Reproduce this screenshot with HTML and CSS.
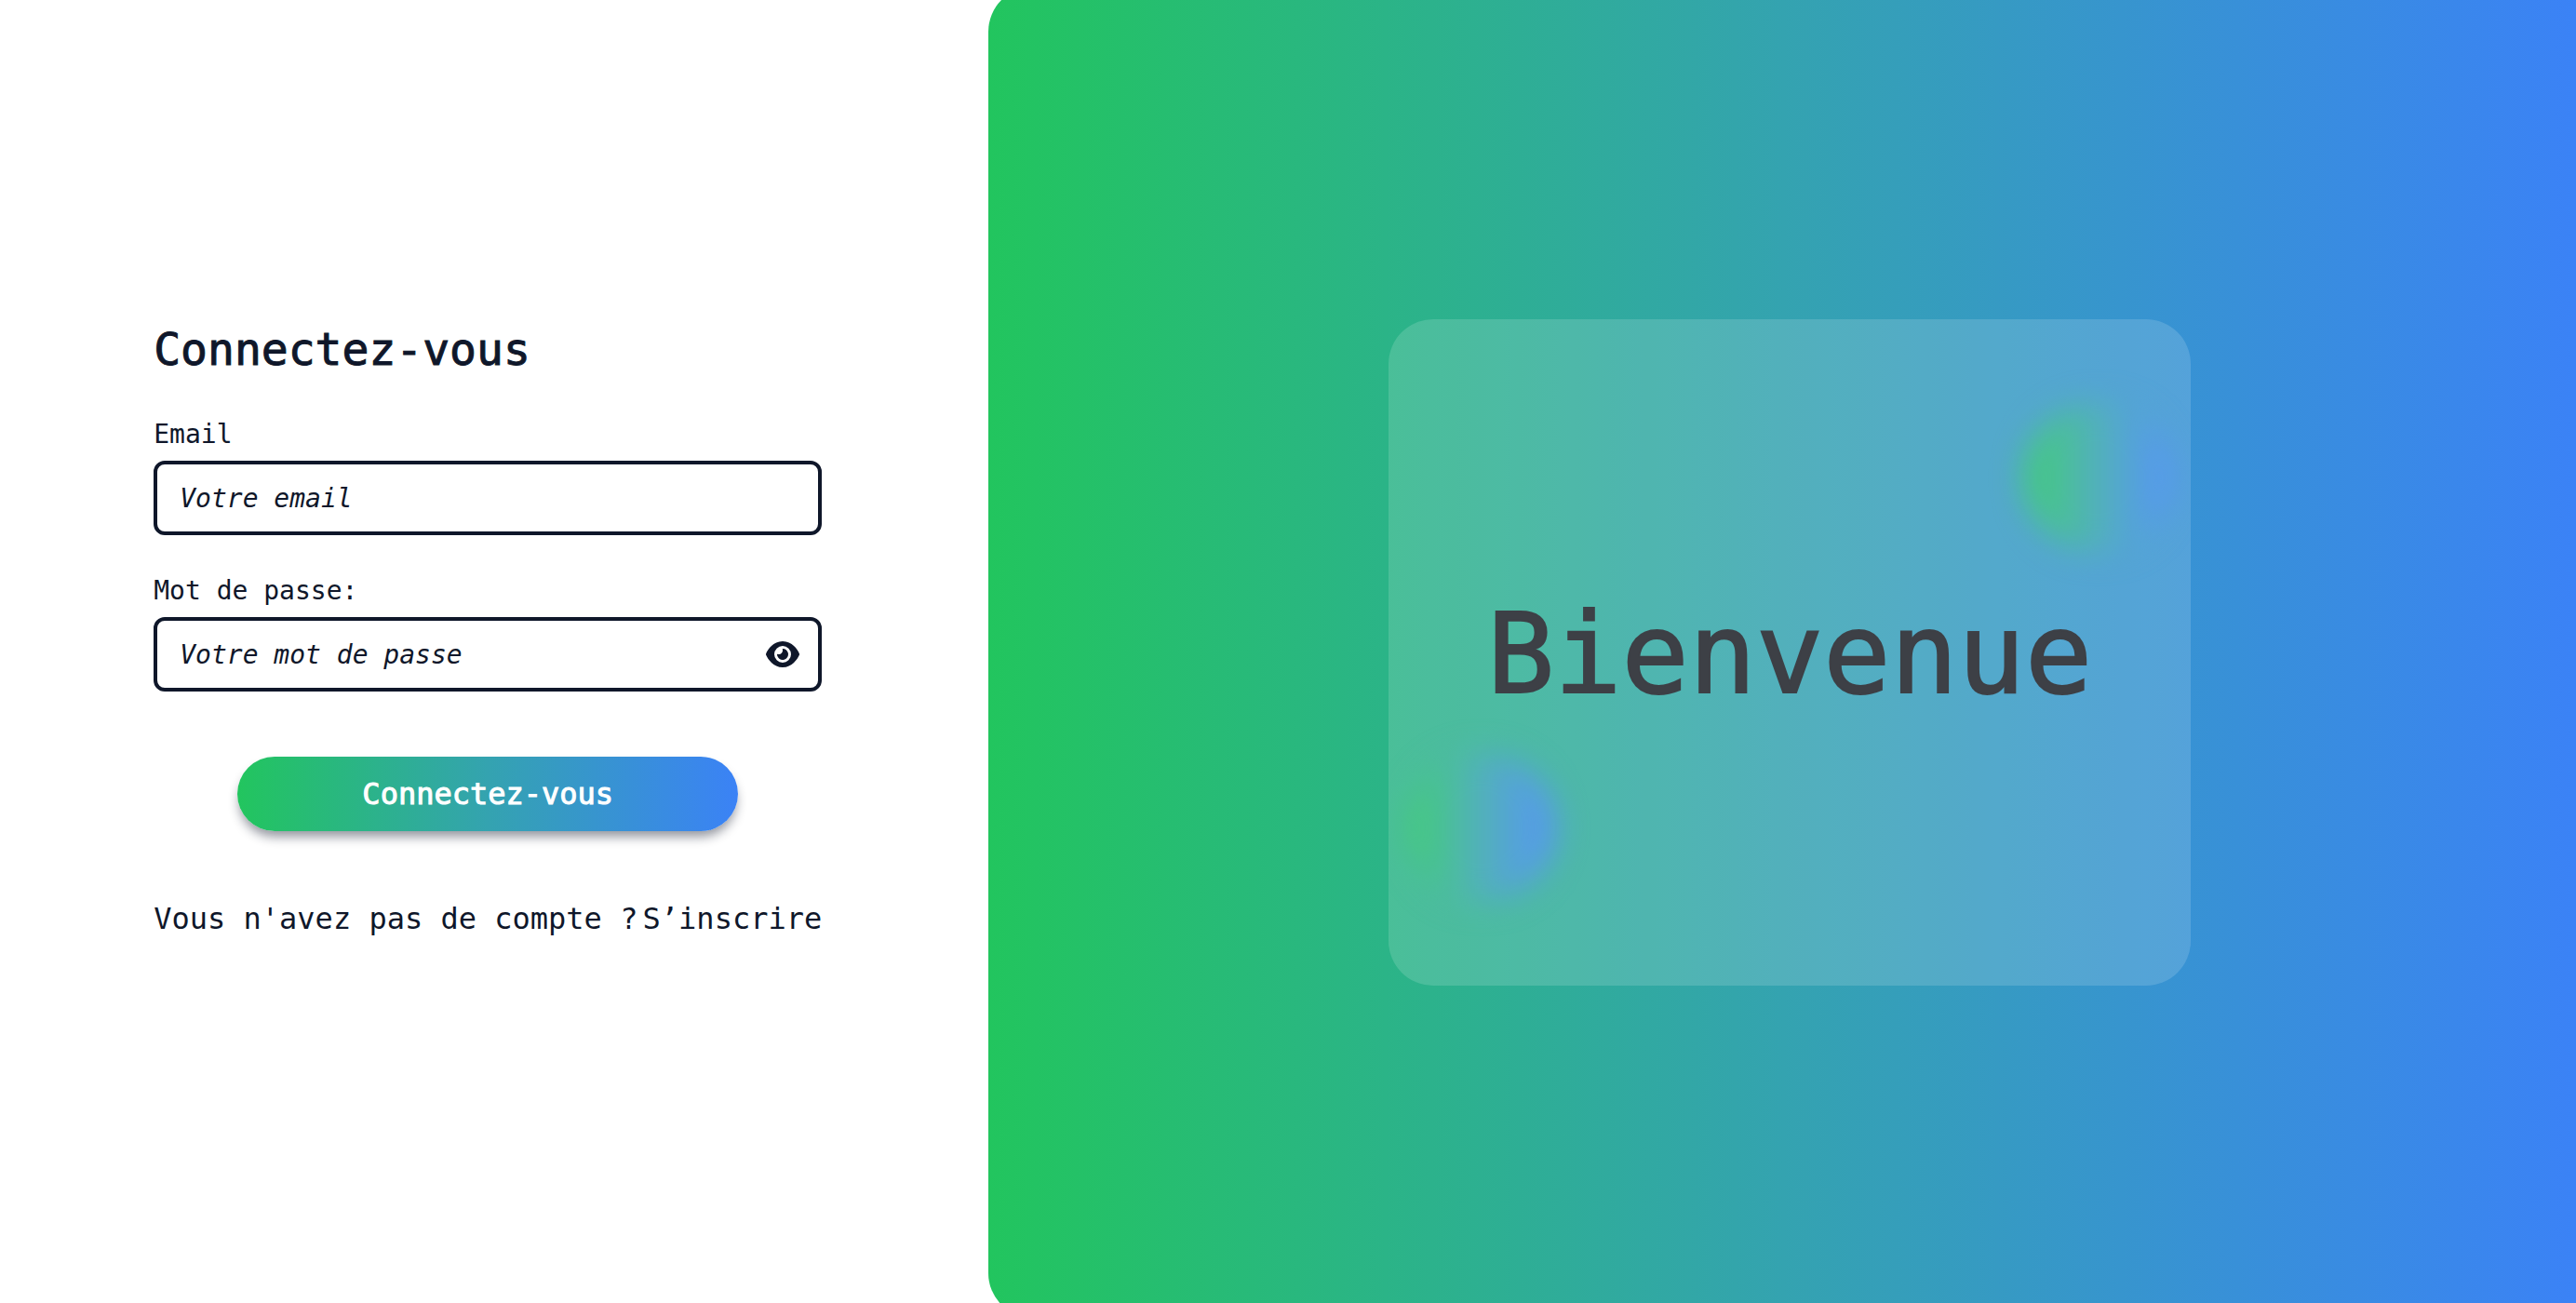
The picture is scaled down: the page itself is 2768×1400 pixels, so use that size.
FILE: index.html
```html
<!DOCTYPE html>
<html lang="fr">
<head>
<meta charset="utf-8">
<title>Connexion</title>
<link rel="stylesheet" href="styles.css">
</head>
<body>
<main class="page">
  <section class="login">
    <form class="form">
      <h1 class="title">Connectez-vous</h1>
      <div class="field">
        <label for="email">Email</label>
        <div class="control">
          <input id="email" type="email" placeholder="Votre email">
        </div>
      </div>
      <div class="field">
        <label for="password">Mot de passe:</label>
        <div class="control">
          <input id="password" type="password" placeholder="Votre mot de passe">
          <button class="reveal" type="button" aria-label="Afficher le mot de passe">
            <svg viewBox="0 0 576 512" aria-hidden="true"><path d="M288 32c-80.800 0-145.500 36.800-192.600 80.600C48.600 156 17.300 208 2.500 243.700c-3.300 7.900-3.300 16.700 0 24.600C17.300 304 48.600 356 95.400 399.400C142.500 443.200 207.200 480 288 480s145.500-36.800 192.600-80.600c46.800-43.500 78.100-95.400 93-131.100c3.300-7.900 3.300-16.700 0-24.600c-14.900-35.700-46.200-87.700-93-131.100C433.500 68.800 368.800 32 288 32zM144 256a144 144 0 1 1 288 0 144 144 0 1 1 -288 0zm144-64c0 35.300-28.700 64-64 64c-7.100 0-13.900-1.200-20.300-3.300c-5.500-1.800-11.900 1.600-11.700 7.400c.3 6.900 1.300 13.800 3.200 20.700c13.700 51.200 66.400 81.600 117.600 67.900s81.600-66.400 67.900-117.600c-11.100-41.500-47.800-69.400-88.600-71.100c-5.800-.2-9.200 6.100-7.400 11.700c2.100 6.400 3.300 13.200 3.300 20.300z"/></svg>
          </button>
        </div>
      </div>
      <button class="submit" type="submit">Connectez-vous</button>
      <p class="signup"><span>Vous n'avez pas de compte ?</span><a href="#inscription">S’inscrire</a></p>
    </form>
  </section>
  <section class="hero">
    <div class="card">
      <span class="orb orb-top"></span>
      <span class="orb orb-bottom"></span>
      <p class="welcome">Bienvenue</p>
    </div>
  </section>
</main>
</body>
</html>
```
FILE: styles.css
```css
* { box-sizing: border-box; }

:root {
  --ink: #0f172a;
  --brand: linear-gradient(to right, #22c55e, #34a3b0, #3b82f6);
}

body {
  margin: 0;
  color: var(--ink);
  background: #fff;
  font-family: "DejaVu Sans Mono", monospace;
}

h1, p { margin: 0; font-weight: 400; }
input, button { font: inherit; color: inherit; }

.page {
  display: grid;
  grid-template-columns: 38fr 61fr;
  min-height: 100vh;
  overflow: hidden;
}

.login {
  display: flex;
  align-items: center;
  justify-content: center;
  padding: 0 14px 46px 0;
}

.form {
  display: flex;
  flex-direction: column;
  width: 718px;
  max-width: 90%;
}

.title {
  margin-bottom: 40px;
  font-size: 48px;
  line-height: 64px;
  -webkit-text-stroke: 1px currentColor;
}

.field { margin-bottom: 40px; }

.field label {
  display: block;
  margin-bottom: 8px;
  font-size: 28px;
  line-height: 40px;
}

.control { position: relative; }

.control input {
  display: block;
  width: 100%;
  height: 80px;
  padding: 0 24px;
  border: 4px solid var(--ink);
  border-radius: 12px;
  background: #fff;
  font-size: 28px;
}

.control input::placeholder {
  color: var(--ink);
  font-style: italic;
  opacity: 1;
}

.reveal {
  position: absolute;
  top: 0;
  right: 24px;
  display: flex;
  align-items: center;
  height: 100%;
  padding: 0;
  border: 0;
  background: none;
}

.reveal svg { width: 36px; height: 32px; fill: currentColor; }

.submit {
  align-self: center;
  width: 75%;
  height: 80px;
  margin: 30px 0 70px;
  border: 0;
  border-radius: 40px;
  color: #fff;
  background: var(--brand);
  box-shadow: 0 8px 12px -2px rgb(15 23 42 / 45%);
  font-size: 32px;
  -webkit-text-stroke: 1px currentColor;
}

.signup {
  display: flex;
  justify-content: space-between;
  font-size: 32px;
  line-height: 48px;
  white-space: nowrap;
}

.signup a { color: inherit; text-decoration: none; }

.hero {
  display: flex;
  align-items: center;
  justify-content: center;
  margin: -14px 0 -16px;
  padding-left: 16px;
  border-radius: 48px 0 0 48px;
  background: var(--brand);
}

.card {
  position: relative;
  display: flex;
  align-items: center;
  justify-content: center;
  padding: 290px 106px 286px;
  border-radius: 48px;
  overflow: hidden;
}

.card::after {
  content: "";
  position: absolute;
  inset: 0;
  background: rgb(255 255 255 / 15%);
}

.welcome {
  color: #1c1f26;
  font-size: 120px;
  line-height: 140px;
  -webkit-text-stroke: 2px currentColor;
}

.orb {
  position: absolute;
  width: 160px;
  height: 160px;
  border-radius: 50%;
  background: var(--brand);
  filter: blur(16px);
}

.orb-top { top: 90px; right: 20px; }
.orb-bottom { bottom: 90px; left: 20px; }
```
